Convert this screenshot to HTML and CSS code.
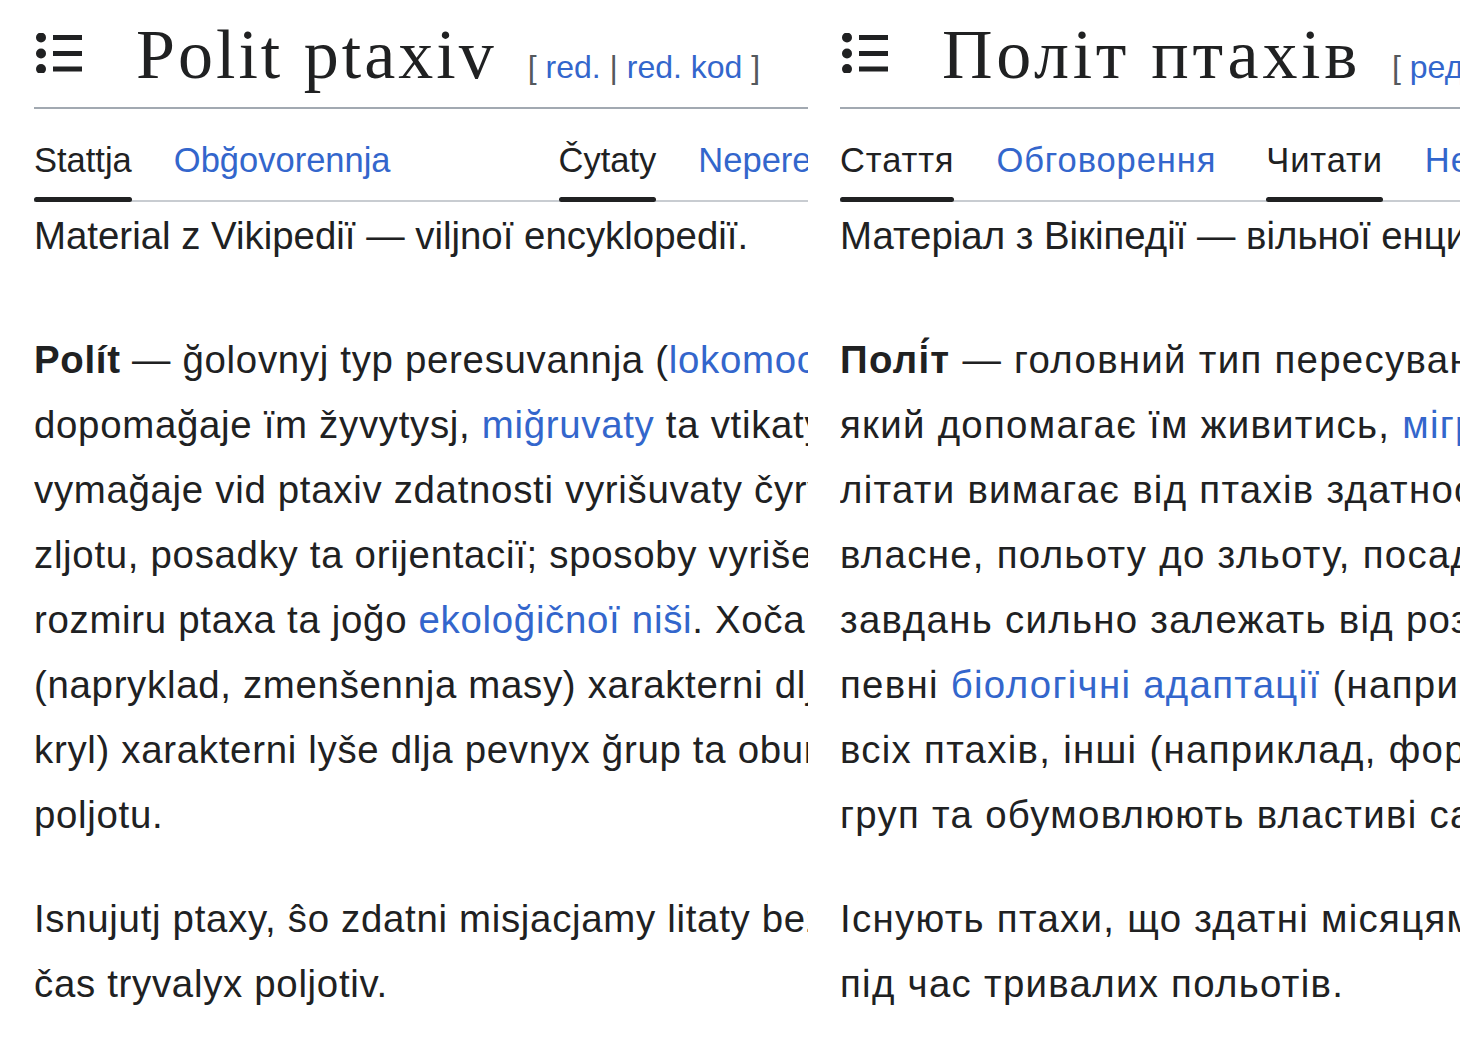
FILE: index.html
```html
<!DOCTYPE html>
<html lang="uk">
<head>
<meta charset="utf-8">
<title>Polit ptaxiv / Політ птахів</title>
<link rel="stylesheet" href="styles.css">
</head>
<body>
<div class="page">
  <section class="column column-lat">
    <header class="heading">
      <svg class="toc-icon" viewBox="0 0 46 40" width="46" height="40" aria-hidden="true">
        <circle cx="5" cy="4.5" r="5"/>
        <circle cx="5" cy="20.5" r="5"/>
        <circle cx="5" cy="36" r="5"/>
        <rect x="17" y="2" width="29" height="5"/>
        <rect x="17" y="18" width="29" height="5"/>
        <rect x="17" y="33.5" width="29" height="5"/>
      </svg>
      <h1 class="title">Polit ptaxiv</h1>
      <span class="edit">[ <a href="#">red.</a> <span class="sep">|</span> <a href="#">red. kod</a> ]</span>
    </header>
    <nav class="tabs">
      <div class="tab-group">
        <span class="tab selected">Stattja</span>
        <a class="tab" href="#">Obğovorennja</a>
      </div>
      <div class="tab-group views">
        <span class="tab selected">Čytaty</span>
        <a class="tab" href="#">Nepereğljanuta zmina</a>
        <a class="tab" href="#">Istorija</a>
      </div>
    </nav>
    <div class="tagline">Material z Vikipediï — viljnoï encyklopediï.</div>
    <div class="content">
      <p><b>Polít</b> — ğolovnyj typ peresuvannja (<a href="#">lokomociï</a>) dlja biljšosti vydiv ptaxiv, jakyj<br>
      dopomağaje ïm žyvytysj, <a href="#">miğruvaty</a> ta vtikaty vid xyžakiv. Zdatnistj litaty<br>
      vymağaje vid ptaxiv zdatnosti vyrišuvaty čyry osnovni zavdannja: vlasne, poljotu do<br>
      zljotu, posadky ta orijentaciï; sposoby vyrišennja cyx zavdanj syljno zaležatj vid<br>
      rozmiru ptaxa ta joğo <a href="#">ekoloğičnoï niši</a>. Xoča pevni <a href="#">biologični adaptaciï</a><br>
      (napryklad, zmenšennja masy) xarakterni dlja vsix ptaxiv, inši (napryklad, forma<br>
      kryl) xarakterni lyše dlja pevnyx ğrup ta obumovljujutj vlastyvi same ïm sposoby<br>
      poljotu.</p>
      <p>Isnujutj ptaxy, ŝo zdatni misjacjamy litaty bez posadky, i ptaxy, jaki spljatj pid<br>
      čas tryvalyx poljotiv.</p>
    </div>
  </section>

  <section class="column column-cyr">
    <header class="heading">
      <svg class="toc-icon" viewBox="0 0 46 40" width="46" height="40" aria-hidden="true">
        <circle cx="5" cy="4.5" r="5"/>
        <circle cx="5" cy="20.5" r="5"/>
        <circle cx="5" cy="36" r="5"/>
        <rect x="17" y="2" width="29" height="5"/>
        <rect x="17" y="18" width="29" height="5"/>
        <rect x="17" y="33.5" width="29" height="5"/>
      </svg>
      <h1 class="title">Політ птахів</h1>
      <span class="edit">[ <a href="#">ред.</a> <span class="sep">|</span> <a href="#">ред. код</a> ]</span>
    </header>
    <nav class="tabs">
      <div class="tab-group">
        <span class="tab selected">Стаття</span>
        <a class="tab" href="#">Обговорення</a>
      </div>
      <div class="tab-group views">
        <span class="tab selected">Читати</span>
        <a class="tab" href="#">Непереглянута зміна</a>
        <a class="tab" href="#">Історія</a>
      </div>
    </nav>
    <div class="tagline">Матеріал з Вікіпедії — вільної енциклопедії.</div>
    <div class="content">
      <p><b>Полі́т</b> — головний тип пересування (<a href="#">локомоції</a>) для більшості видів птахів,<br>
      який допомагає їм живитись, <a href="#">мігрувати</a> та втікати від хижаків. Здатність<br>
      літати вимагає від птахів здатності вирішувати чотири основні завдання:<br>
      власне, польоту до зльоту, посадки та орієнтації; способи вирішення цих<br>
      завдань сильно залежать від розміру птаха та його <a href="#">екологічної ніші</a>. Хоча<br>
      певні <a href="#">біологічні адаптації</a> (наприклад, зменшення маси) характерні для<br>
      всіх птахів, інші (наприклад, форма крил) характерні лише для певних<br>
      груп та обумовлюють властиві саме їм способи польоту.</p>
      <p>Існують птахи, що здатні місяцями літати без посадки, і птахи, що сплять<br>
      під час тривалих польотів.</p>
    </div>
  </section>
</div>
</body>
</html>
```

FILE: styles.css
```css
html, body {
  margin: 0;
  padding: 0;
  background: #ffffff;
  overflow: hidden;
}

body {
  width: 1460px;
  height: 1060px;
  font-family: "Liberation Sans", Arial, sans-serif;
  color: #202122;
}

a {
  color: #3366cc;
  text-decoration: none;
}

.page {
  display: flex;
  gap: 32px;
  padding-left: 34px;
}

.column {
  width: 774px;
  flex-shrink: 0;
  overflow: hidden;
}

/* Heading */
.heading {
  display: flex;
  align-items: baseline;
  padding-top: 10px;
  height: 97px;
  border-bottom: 2px solid #a2a9b1;
  white-space: nowrap;
}

.toc-icon {
  align-self: flex-start;
  flex-shrink: 0;
  margin-top: 23px;
  margin-left: 2px;
  margin-right: 54px;
  fill: #202122;
}

.title {
  margin: 0;
  font-family: "Liberation Serif", "Times New Roman", serif;
  font-weight: normal;
  font-size: 70px;
  line-height: 90px;
  letter-spacing: 3px;
  color: #202122;
}

.column-cyr .title {
  letter-spacing: 3.7px;
}

.edit {
  margin-left: 31px;
  font-size: 32px;
  color: #54595d;
}

.edit .sep {
  color: #54595d;
}

/* Tabs */
.tabs {
  display: flex;
  border-bottom: 2px solid #c8ccd1;
  white-space: nowrap;
}

.tab-group {
  display: flex;
  flex-shrink: 0;
}

.tab {
  position: relative;
  display: block;
  flex-shrink: 0;
  margin-right: 42px;
  padding: 31px 0 22px;
  margin-bottom: -2px;
  font-size: 34.5px;
  line-height: 40px;
  color: #3366cc;
}

.column-cyr .tab {
  letter-spacing: 0.9px;
}

.tab.selected {
  color: #202122;
}

.tab.selected::after {
  content: "";
  position: absolute;
  left: 0;
  right: 0;
  bottom: 0;
  height: 5px;
  border-radius: 3px;
  background: #202122;
}

.column-lat .views {
  margin-left: 126px;
}

.column-cyr .views {
  margin-left: 8px;
}

/* Content */
.tagline {
  margin-top: 1px;
  font-size: 38.4px;
  line-height: 65px;
  white-space: nowrap;
}

.content {
  margin-top: 59px;
  font-size: 38.4px;
  line-height: 65px;
  white-space: nowrap;
}

.column-lat .content {
  letter-spacing: 0.7px;
}

.column-cyr .content {
  letter-spacing: 1.3px;
}

.content p {
  margin: 0 0 39px;
}

.content b {
  font-weight: bold;
}
```
